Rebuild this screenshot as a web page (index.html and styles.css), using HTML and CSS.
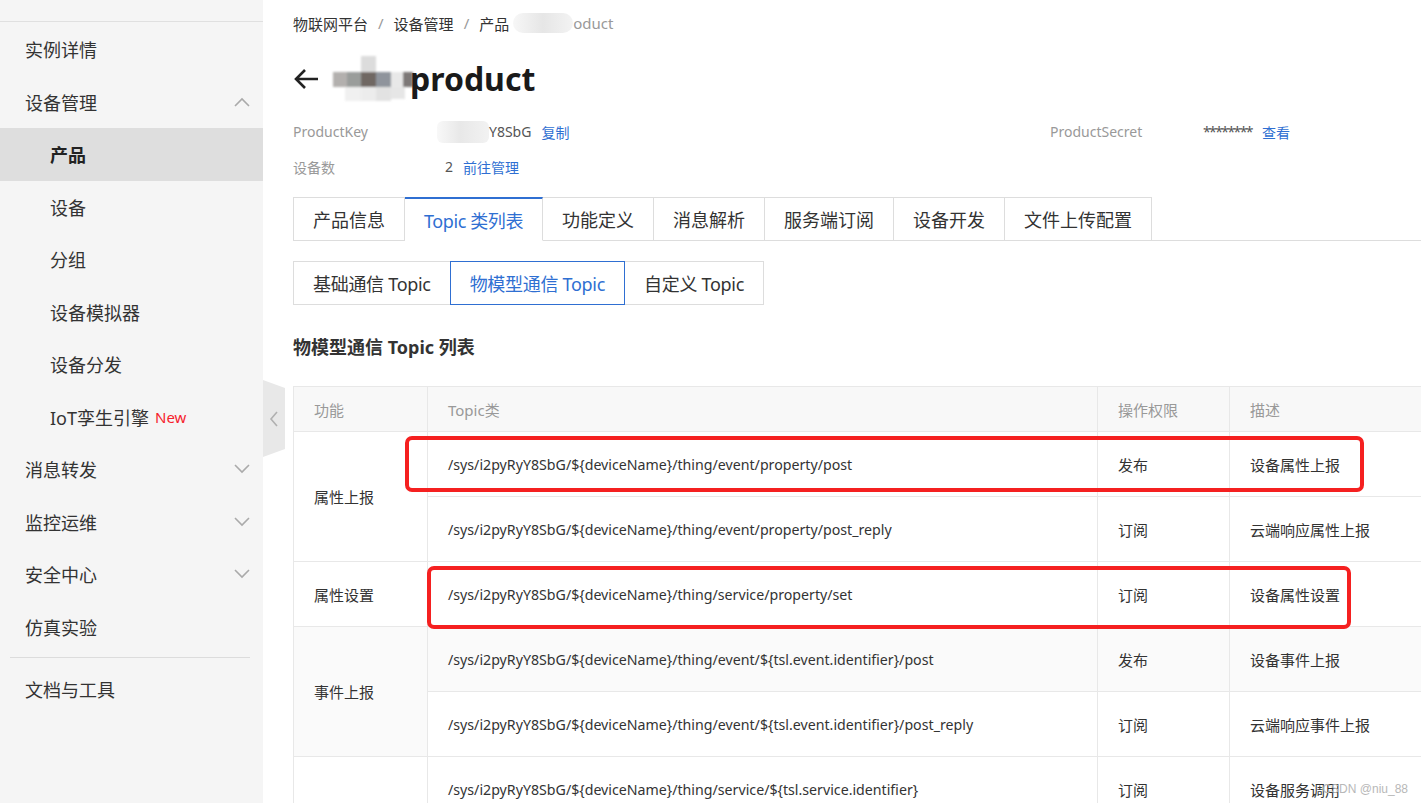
FILE: index.html
```html
<!DOCTYPE html>
<html>
  <head>
    <title>物模型通信 Topic</title>
    <link rel="stylesheet" href="styles.css">
  </head>
  <body>
    <div class="layout">
      <aside class="sidebar">
        <ul class="menu">
          <li class="menu-item">实例详情</li>
          <li class="menu-item">设备管理
            <svg class="chev" width="16" height="10" viewBox="0 0 16 10"><polyline points="1,9 8,2 15,9" fill="none" stroke="#aaa" stroke-width="1.6"/></svg>
          </li>
          <li class="menu-item sub active">产品</li>
          <li class="menu-item sub">设备</li>
          <li class="menu-item sub">分组</li>
          <li class="menu-item sub">设备模拟器</li>
          <li class="menu-item sub">设备分发</li>
          <li class="menu-item sub">IoT孪生引擎 <span class="new">New</span></li>
          <li class="menu-item">消息转发
            <svg class="chev" width="16" height="10" viewBox="0 0 16 10"><polyline points="1,1 8,8 15,1" fill="none" stroke="#aaa" stroke-width="1.6"/></svg>
          </li>
          <li class="menu-item">监控运维
            <svg class="chev" width="16" height="10" viewBox="0 0 16 10"><polyline points="1,1 8,8 15,1" fill="none" stroke="#aaa" stroke-width="1.6"/></svg>
          </li>
          <li class="menu-item">安全中心
            <svg class="chev" width="16" height="10" viewBox="0 0 16 10"><polyline points="1,1 8,8 15,1" fill="none" stroke="#aaa" stroke-width="1.6"/></svg>
          </li>
          <li class="menu-item">仿真实验</li>
          <li class="menu-divider"></li>
          <li class="menu-item">文档与工具</li>
        </ul>
        <div class="collapse-handle">
          <svg width="22" height="77" viewBox="0 0 22 77">
            <polygon points="0,0 22,8 22,69 0,77" fill="#e8e8e8"/>
            <polyline points="14,32 8,39 14,46" fill="none" stroke="#b0b0b0" stroke-width="1.6"/>
          </svg>
        </div>
      </aside>

      <main class="main">
        <div class="breadcrumb">
          <span>物联网平台</span><span class="sep">/</span>
          <span>设备管理</span><span class="sep">/</span>
          <span>产品</span>
          <span class="crumb-last"><span class="mosaic-sm"></span>oduct</span>
        </div>

        <div class="title-row">
          <svg class="back" width="26" height="22" viewBox="0 0 26 22"><path d="M25 11H3 M12 2L3 11L12 20" fill="none" stroke="#222" stroke-width="2.6"/></svg>
          <svg class="mosaic" width="84" height="50" viewBox="0 0 84 50">
            <defs><filter id="soft"><feGaussianBlur stdDeviation="1.2"/></filter></defs>
            <g filter="url(#soft)">
              <rect x="30" y="2" width="15" height="16" fill="#dcdcdc"/>
              <rect x="2" y="18" width="16" height="15" fill="#b3b0ae"/>
              <rect x="16" y="18" width="15" height="15" fill="#9a9d9b"/>
              <rect x="30" y="18" width="15" height="15" fill="#6f6764"/>
              <rect x="45" y="18" width="15" height="15" fill="#8f949c"/>
              <rect x="60" y="18" width="14" height="15" fill="#e8e8e8"/>
              <rect x="72" y="18" width="10" height="15" fill="#7d7877"/>
              <rect x="14" y="33" width="16" height="14" fill="#f0f0f0"/>
              <rect x="30" y="33" width="15" height="14" fill="#ececec"/>
              <rect x="45" y="33" width="15" height="14" fill="#e2e2e2"/>
              <rect x="60" y="33" width="14" height="12" fill="#e6e6e6"/>
            </g>
          </svg>
          <h1 class="title">product</h1>
        </div>

        <div class="info">
          <span class="info-label">ProductKey</span>
          <span class="info-value"><span class="mosaic-key"></span>Y8SbG <a class="link">复制</a></span>
          <span class="info-label">ProductSecret</span>
          <span class="info-value"><span class="stars">********</span> <a class="link">查看</a></span>
          <span class="info-label">设备数</span>
          <span class="info-value">2 <a class="link">前往管理</a></span>
        </div>

        <div class="tabs">
          <div class="tab">产品信息</div>
          <div class="tab active">Topic 类列表</div>
          <div class="tab">功能定义</div>
          <div class="tab">消息解析</div>
          <div class="tab">服务端订阅</div>
          <div class="tab">设备开发</div>
          <div class="tab">文件上传配置</div>
        </div>

        <div class="seg">
          <div class="seg-btn">基础通信 Topic</div>
          <div class="seg-btn active">物模型通信 Topic</div>
          <div class="seg-btn">自定义 Topic</div>
        </div>

        <h3 class="section-title">物模型通信 Topic 列表</h3>

        <div class="table-wrap">
          <table class="topic-table">
            <colgroup>
              <col class="c-fn"><col class="c-topic"><col class="c-perm"><col class="c-desc">
            </colgroup>
            <thead>
              <tr><th>功能</th><th>Topic类</th><th>操作权限</th><th>描述</th></tr>
            </thead>
            <tbody>
              <tr>
                <td rowspan="2">属性上报</td>
                <td class="topic">/sys/i2pyRyY8SbG/${deviceName}/thing/event/property/post</td>
                <td>发布</td><td>设备属性上报</td>
              </tr>
              <tr>
                <td class="topic">/sys/i2pyRyY8SbG/${deviceName}/thing/event/property/post_reply</td>
                <td>订阅</td><td>云端响应属性上报</td>
              </tr>
              <tr>
                <td>属性设置</td>
                <td class="topic">/sys/i2pyRyY8SbG/${deviceName}/thing/service/property/set</td>
                <td>订阅</td><td>设备属性设置</td>
              </tr>
              <tr class="hover">
                <td rowspan="2">事件上报</td>
                <td class="topic">/sys/i2pyRyY8SbG/${deviceName}/thing/event/${tsl.event.identifier}/post</td>
                <td>发布</td><td>设备事件上报</td>
              </tr>
              <tr>
                <td class="topic">/sys/i2pyRyY8SbG/${deviceName}/thing/event/${tsl.event.identifier}/post_reply</td>
                <td>订阅</td><td>云端响应事件上报</td>
              </tr>
              <tr>
                <td></td>
                <td class="topic">/sys/i2pyRyY8SbG/${deviceName}/thing/service/${tsl.service.identifier}</td>
                <td>订阅</td><td>设备服务调用</td>
              </tr>
            </tbody>
          </table>
          <div class="mark mark-1"></div>
          <div class="mark mark-2"></div>
        </div>
      </main>
    </div>
    <div class="watermark">CSDN @niu_88</div>
  </body>
</html>
```

FILE: styles.css
```css
body {
  margin: 0;
  padding: 0;
  font-family: "Noto Sans", "Noto Sans CJK SC", sans-serif;
  color: #333;
  background: #fff;
  overflow: hidden;
}

.layout {
  display: flex;
  height: 803px;
}

/* sidebar */
.sidebar {
  position: relative;
  flex: none;
  width: 263px;
  background: #f5f5f5;
  padding-top: 21px;
  box-sizing: border-box;
}

.menu {
  list-style: none;
  margin: 0;
  padding: 1px 0 0;
  border-top: 1px solid #e0e0e0;
}

.menu-item {
  display: flex;
  align-items: center;
  height: 52.5px;
  padding-left: 25px;
  padding-right: 13px;
  font-size: 18px;
  color: #333;
}

.menu-item.sub {
  padding-left: 50px;
}

.menu-item.active {
  background: #dedede;
  font-weight: bold;
  color: #222;
}

.chev {
  margin-left: auto;
}

.new {
  color: #f5222d;
  font-size: 15px;
  margin-left: 6px;
}

.menu-divider {
  height: 1px;
  background: #dcdcdc;
  margin: 4px 13px 5px 10px;
}

.collapse-handle {
  position: absolute;
  top: 380px;
  right: -22px;
  width: 22px;
  height: 77px;
}

.collapse-handle svg {
  display: block;
}

/* main */
.main {
  flex: 1;
  min-width: 0;
  padding-left: 30px;
  overflow: hidden;
}

.breadcrumb {
  height: 46px;
  display: flex;
  align-items: center;
  font-size: 15px;
  color: #333;
}

.breadcrumb .sep {
  color: #999;
  margin: 0 10px;
}

.crumb-last {
  display: flex;
  align-items: center;
  color: #999;
  margin-left: 4px;
}

.mosaic-sm {
  display: inline-block;
  width: 60px;
  height: 20px;
  background: linear-gradient(90deg, #f7f7f7, #e6e6e6 50%, #f3f3f3);
  border-radius: 10px;
}

.title-row {
  display: flex;
  align-items: center;
  height: 66px;
}

.back {
  margin-right: 12px;
}

.mosaic {
  margin-right: -5px;
}

.title {
  margin: 0;
  font-size: 32px;
  font-weight: bold;
  color: #1a1a1a;
  line-height: 1;
}

.info {
  display: grid;
  grid-template-columns: 152px 605px 153px auto;
  font-size: 14px;
  margin-top: 2px;
}

.info > span {
  height: 35px;
  display: flex;
  align-items: center;
}

.info-label {
  color: #999;
}

.info-value {
  color: #555;
}

.mosaic-key {
  display: inline-block;
  width: 52px;
  height: 22px;
  margin-left: -8px;
  background: linear-gradient(90deg, #f8f8f8, #e8e8e8 45%, #f2f2f2);
  border-radius: 6px;
}

.stars {
  letter-spacing: -1.6px;
}

.link {
  color: #2f6fd2;
  margin-left: 10px;
}

/* tabs */
.tabs {
  display: flex;
  margin-top: 13px;
  border-bottom: 1px solid #ddd;
}

.tab {
  height: 42px;
  padding: 0 19px;
  display: flex;
  align-items: center;
  font-size: 18px;
  color: #333;
  border: 1px solid #ddd;
  border-left: none;
  margin-bottom: -1px;
  background: #fff;
}

.tab:first-child {
  border-left: 1px solid #ddd;
}

.tab.active {
  color: #2f6fd2;
  border-top: 2px solid #2f6fd2;
  border-bottom-color: #fff;
  height: 41px;
  letter-spacing: -0.4px;
}

.seg {
  display: flex;
  margin-top: 20px;
}

.seg-btn {
  height: 42px;
  padding: 0 19px;
  display: flex;
  align-items: center;
  font-size: 18px;
  color: #333;
  border: 1px solid #ddd;
  margin-left: -1px;
  letter-spacing: -0.3px;
}

.seg-btn:first-child {
  margin-left: 0;
}

.seg-btn.active {
  color: #2f6fd2;
  border-color: #2f6fd2;
  position: relative;
}

.section-title {
  margin: 0;
  height: 81px;
  display: flex;
  align-items: center;
  font-size: 18px;
  font-weight: bold;
  color: #333;
}

/* table */
.table-wrap {
  position: relative;
  width: 1250px;
}

.topic-table {
  width: 1250px;
  border-collapse: collapse;
  table-layout: fixed;
}

.c-fn { width: 134px; }
.c-topic { width: 670px; }
.c-perm { width: 132px; }

.topic-table th,
.topic-table td {
  border: 1px solid #e8e8e8;
  text-align: left;
  padding: 0 20px;
}

.topic-table th {
  height: 44px;
  background: #f8f8f8;
  color: #999;
  font-weight: normal;
  font-size: 15px;
}

.topic-table td {
  height: 64px;
  color: #333;
  font-size: 15px;
  white-space: nowrap;
}

.topic-table td.topic {
  font-size: 14.2px;
}

.topic-table tr.hover td {
  background: #fafafa;
}

.mark {
  position: absolute;
  border: 4px solid #f52020;
  border-radius: 7px;
  box-sizing: border-box;
}

.mark-1 {
  left: 112px;
  top: 50px;
  width: 959px;
  height: 56px;
}

.mark-2 {
  left: 134px;
  top: 180px;
  width: 924px;
  height: 63px;
}

.watermark {
  position: absolute;
  right: 13px;
  bottom: 7px;
  font-size: 12px;
  color: #b8b8b8;
  font-family: "Liberation Sans", sans-serif;
}
```
